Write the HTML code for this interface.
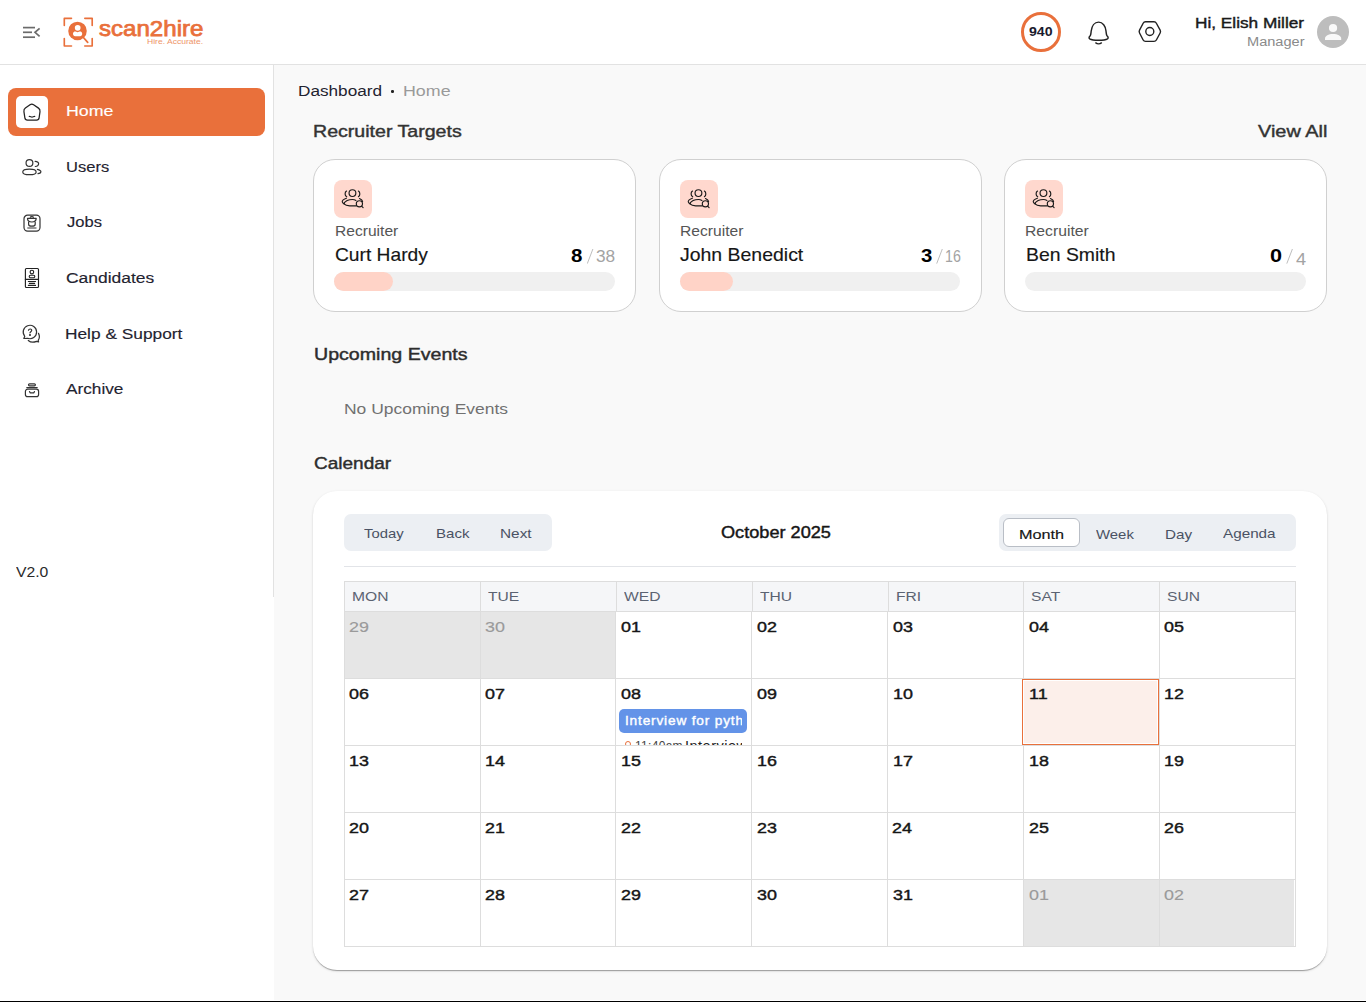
<!DOCTYPE html>
<html><head><meta charset="utf-8"><style>
html,body{margin:0;padding:0}
body{width:1366px;height:1002px;overflow:hidden;position:relative;font-family:"Liberation Sans", sans-serif;background:#fff}
.t{position:absolute;white-space:nowrap;line-height:1;transform-origin:0 50%}

</style></head><body>
<div class="b" style="position:absolute;left:0px;top:0px;width:1366px;height:1000px;background:#f9f9f9"></div>
<div class="b" style="position:absolute;left:0px;top:0px;width:1366px;height:64px;background:#fff"></div>
<div class="b" style="position:absolute;left:0px;top:64px;width:1366px;height:1px;background:#e2e2e2"></div>
<div class="b" style="position:absolute;left:0px;top:65px;width:273px;height:532px;background:#fff"></div>
<div class="b" style="position:absolute;left:273px;top:65px;width:1px;height:532px;background:#e2e2e2"></div>
<div class="b" style="position:absolute;left:0px;top:597px;width:274px;height:403px;background:#fff"></div>
<div class="b" style="position:absolute;left:0px;top:1000px;width:1366px;height:1px;background:#fff"></div>
<div class="b" style="position:absolute;left:0px;top:1001px;width:1366px;height:1px;background:#000"></div>
<svg class="b" style="position:absolute;left:20px;top:22px" width="24" height="20" viewBox="0 0 24 20"><g stroke="#6b6b6b" stroke-width="1.7" fill="none" stroke-linecap="butt"><line x1="3" y1="5.6" x2="15" y2="5.6"/><line x1="3" y1="10.3" x2="12" y2="10.3"/><line x1="3" y1="15.2" x2="15" y2="15.2"/><polyline points="19.6,6.3 15,10.3 19.6,14.4" stroke-linejoin="miter"/></g></svg>
<svg class="b" style="position:absolute;left:62px;top:16px" width="32" height="32" viewBox="0 0 32 32"><g stroke="#E9703B" stroke-width="1.65" fill="none" stroke-linecap="round" stroke-linejoin="round"><polyline points="2.3,9.5 2.3,2.3 9.5,2.3"/><polyline points="22.8,2.3 30.2,2.3 30.2,9.5"/><polyline points="2.3,22.6 2.3,30 9.5,30"/><polyline points="30.2,22.6 30.2,30 22.8,30"/><line x1="21.2" y1="21.2" x2="25.7" y2="26.4" stroke-width="1.75"/></g><circle cx="15.5" cy="14.9" r="9.25" fill="#E9703B"/><circle cx="15.7" cy="11.8" r="2.85" fill="#fff"/><path d="M12.4,15.6 C13.3,15.1 14.5,16.2 15.6,16.2 C16.7,16.2 17.9,15.1 18.8,15.6 C20.2,16.3 20.6,18 19.8,19.2 C19,20.3 17.3,20.3 15.6,20.3 C13.9,20.3 12.2,20.3 11.4,19.2 C10.6,18 11,16.3 12.4,15.6 Z" fill="#fff"/></svg>
<div class="t" style="left:98.89px;top:18.77px;font-size:21.5px;font-weight:400;color:#E9703B;-webkit-text-stroke:0.75px currentColor;transform:scaleX(1.1197);">scan2hire</div>
<div class="t" style="left:147.08px;top:37.89px;font-size:7px;font-weight:400;color:#EE9468;transform:scaleX(1.2200);">Hire. Accurate.</div>
<div class="b" style="position:absolute;left:1021px;top:12px;width:34px;height:34px;border:3px solid #E9703B;border-radius:50%;background:#fff"></div>
<div class="t" style="left:1028.82px;top:26.03px;font-size:12.5px;font-weight:700;color:#1a1a2e;transform:scaleX(1.1311);">940</div>
<svg class="b" style="position:absolute;left:1086px;top:20px" width="26" height="26" viewBox="0 0 26 26"><g stroke="#222" stroke-width="1.45" fill="none" stroke-linejoin="round" stroke-linecap="round"><path d="M4.2,15.8 C5,14.8 4.9,13 5.2,11 C5.8,6 8.5,2.1 12.6,2.1 C16.7,2.1 19.6,6 20,11 C20.3,13 20.2,14.8 21,15.8 C22.2,17 22.6,18 21.5,18.8 C19.5,20 16,20.2 12.6,20.2 C9.2,20.2 5.7,20 3.7,18.8 C2.6,18 3,17 4.2,15.8 Z"/><path d="M9.8,22.9 C11.2,23.9 14,23.9 15.4,22.9"/></g></svg>
<svg class="b" style="position:absolute;left:1136px;top:19px" width="28" height="26" viewBox="0 0 28 26"><g stroke="#222" stroke-width="1.4" fill="none" stroke-linejoin="round"><path d="M3.54,14.02 Q2.80,12.60 3.54,11.18 L7.16,4.22 Q7.90,2.80 9.50,2.80 L18.00,2.80 Q19.60,2.80 20.36,4.21 L24.14,11.19 Q24.90,12.60 24.14,14.01 L20.36,20.99 Q19.60,22.40 18.00,22.40 L9.50,22.40 Q7.90,22.40 7.16,20.98 Z"/><circle cx="13.8" cy="12.5" r="4.0"/></g></svg>
<div class="t" style="left:1194.85px;top:14.78px;font-size:15.4px;font-weight:400;color:#1a1a1a;-webkit-text-stroke:0.42px currentColor;transform:scaleX(1.1190);">Hi, Elish Miller</div>
<div class="t" style="left:1246.59px;top:35.95px;font-size:12.5px;font-weight:400;color:#8a8a8a;transform:scaleX(1.1669);">Manager</div>
<svg class="b" style="position:absolute;left:1316px;top:15px" width="34" height="34" viewBox="0 0 34 34"><circle cx="17" cy="17" r="16" fill="#bdbdbd"/><circle cx="17.05" cy="13" r="4.1" fill="#f9f9f9"/><path d="M9,25 L9,23.6 C9,20.8 12.5,19 17.1,19 C21.7,19 25.2,20.8 25.2,23.6 L25.2,25 Z" fill="#f9f9f9"/></svg>
<div class="b" style="position:absolute;left:8px;top:88px;width:257px;height:48px;background:#E9703B;border-radius:8px"></div>
<div class="b" style="position:absolute;left:16px;top:96px;width:32px;height:32px;background:#fff;border-radius:5px"></div>
<svg class="b" style="position:absolute;left:22px;top:102px" width="20" height="20" viewBox="0 0 20 20"><g stroke="#222" stroke-width="1.25" fill="none" stroke-linejoin="round" stroke-linecap="round"><path d="M8.02,2.70 Q9.80,1.40 11.60,2.67 L16.50,6.13 Q18.30,7.40 17.99,9.58 L17.11,15.82 Q16.80,18.00 14.60,18.00 L5.40,18.00 Q3.20,18.00 2.87,15.82 L1.93,9.58 Q1.60,7.40 3.38,6.10 Z"/><path d="M7.3,14.4 C8.5,14.4 9,15.1 10,15.1 C11,15.1 11.5,14.4 12.7,14.4"/></g></svg>
<div class="t" style="left:65.88px;top:102.94px;font-size:15.55px;font-weight:400;color:#fff;-webkit-text-stroke:0.15px currentColor;transform:scaleX(1.1440);">Home</div>
<div class="t" style="left:66.07px;top:158.86px;font-size:15.5px;font-weight:400;color:#1f2330;-webkit-text-stroke:0.15px currentColor;transform:scaleX(1.0659);">Users</div>
<div class="t" style="left:66.50px;top:213.79px;font-size:15.5px;font-weight:400;color:#1f2330;-webkit-text-stroke:0.15px currentColor;transform:scaleX(1.0684);">Jobs</div>
<div class="t" style="left:65.53px;top:270.42px;font-size:15.5px;font-weight:400;color:#1f2330;-webkit-text-stroke:0.15px currentColor;transform:scaleX(1.1248);">Candidates</div>
<div class="t" style="left:64.61px;top:325.80px;font-size:15.5px;font-weight:400;color:#1f2330;-webkit-text-stroke:0.15px currentColor;transform:scaleX(1.1165);">Help &amp; Support</div>
<div class="t" style="left:66.46px;top:380.81px;font-size:15.5px;font-weight:400;color:#1f2330;-webkit-text-stroke:0.15px currentColor;transform:scaleX(1.1107);">Archive</div>
<div class="t" style="left:15.64px;top:563.67px;font-size:15px;font-weight:400;color:#2a2a2a;transform:scaleX(1.0493);">V2.0</div>
<svg class="b" style="position:absolute;left:21px;top:157px" width="22" height="20" viewBox="0 0 22 20"><g stroke="#333" stroke-width="1.2" fill="none" stroke-linecap="round" stroke-linejoin="round"><circle cx="8.45" cy="5.95" r="3.4"/><ellipse cx="8.45" cy="14.9" rx="6.7" ry="2.8"/><path d="M14.1,4.3 C16.6,4.3 17.8,5.8 17.6,7 C17.4,8.3 16,9.5 14.3,9.5"/><path d="M16.4,12.3 C18.6,12.9 20.2,14 19.9,15 C19.7,15.8 18.3,16.5 17,16.6"/></g></svg>
<svg class="b" style="position:absolute;left:21px;top:212px" width="22" height="22" viewBox="0 0 22 22"><g stroke="#333" stroke-width="1.2" fill="none" stroke-linecap="round" stroke-linejoin="round"><rect x="3" y="3.2" width="16" height="16" rx="3.6"/><path d="M6.5,6.3 L15.2,6.3 C15.2,9.2 13,10 10.85,10 C8.7,10 6.5,9.2 6.5,6.3 Z"/><path d="M7.6,10.2 L7.6,12.2 C7.6,13.6 9,14.2 10.85,14.2 C12.7,14.2 14.2,13.6 14.2,12.2 L14.2,10.2"/><path d="M9.3,5.3 C9.6,4.4 12.1,4.4 12.4,5.3"/><line x1="6.8" y1="16" x2="15" y2="16" stroke="#777" stroke-width="1.4"/></g></svg>
<svg class="b" style="position:absolute;left:23px;top:266px" width="18" height="24" viewBox="0 0 18 24"><g stroke="#222" stroke-width="1.15" fill="none" stroke-linecap="round" stroke-linejoin="round"><rect x="2.4" y="2.5" width="13.1" height="19" rx="1"/><line x1="2.4" y1="13.4" x2="15.5" y2="13.4"/><circle cx="8.9" cy="6" r="1.8"/><rect x="6.2" y="9.2" width="5.6" height="2.5" rx="1.2"/><line x1="5.4" y1="15.5" x2="12.5" y2="15.5"/><line x1="6.4" y1="17.4" x2="11.6" y2="17.4"/><line x1="5.4" y1="19.4" x2="12.5" y2="19.4"/></g></svg>
<svg class="b" style="position:absolute;left:20px;top:323px" width="24" height="22" viewBox="0 0 24 22"><g stroke="#333" stroke-width="1.2" fill="none" stroke-linecap="round" stroke-linejoin="round"><path d="M4.77,13.31 A6.7,6.7 0 1 1 7.61,15.3 L3.8,15.5 Z"/><path d="M8.5,7.2 C8.7,5.6 11.9,5.5 11.7,7.4 C11.6,8.5 10.2,8.8 10,9.8"/><circle cx="10" cy="12" r="0.45" fill="#333"/><path d="M18.5,10.4 C19.6,12.5 19.5,15.5 18.2,17.4 L18.6,18.8 L16.5,18.4 C14,19.4 10.2,19.2 8.3,17.5"/></g></svg>
<svg class="b" style="position:absolute;left:23px;top:381px" width="18" height="18" viewBox="0 0 18 18"><g stroke="#333" stroke-width="1.2" fill="none" stroke-linecap="round" stroke-linejoin="round"><rect x="2.4" y="8.2" width="13.2" height="7.4" rx="2.2"/><rect x="5.5" y="2.8" width="6.9" height="2" rx="1"/><line x1="3.8" y1="6.6" x2="14.2" y2="6.6"/><path d="M6.5,10.6 L7.3,11.8 L10.7,11.8 L11.5,10.6"/></g></svg>
<div class="t" style="left:298.42px;top:82.79px;font-size:15.5px;font-weight:400;color:#1f2330;transform:scaleX(1.1081);">Dashboard</div>
<div class="b" style="position:absolute;left:391.4px;top:90.4px;width:2.6px;height:2.6px;background:#222;border-radius:50%"></div>
<div class="t" style="left:403.07px;top:83.09px;font-size:15.5px;font-weight:400;color:#9a9a9a;transform:scaleX(1.1500);">Home</div>
<div class="t" style="left:313.46px;top:123.92px;font-size:16.8px;font-weight:400;color:#333;-webkit-text-stroke:0.42px currentColor;transform:scaleX(1.1669);">Recruiter Targets</div>
<div class="t" style="left:1257.51px;top:122.56px;font-size:17.2px;font-weight:400;color:#333;-webkit-text-stroke:0.42px currentColor;transform:scaleX(1.1579);">View All</div>
<div class="b" style="position:absolute;left:313px;top:159px;width:321px;height:151px;border:1px solid #d0d0d0;border-radius:22px;background:#fff"></div>
<div class="b" style="position:absolute;left:334px;top:180px;width:38px;height:38px;background:#FFD8CE;border-radius:8px"></div>
<svg class="b" style="position:absolute;left:338px;top:184px" width="30" height="28" viewBox="0 0 30 28"><g stroke="#1a1a1a" stroke-width="1.15" fill="none" stroke-linecap="round"><circle cx="14.45" cy="9.1" r="3.4"/><path d="M8.5,7.1 C6.6,8.3 6.6,11.5 8.7,12.7"/><path d="M20.4,7.1 C22.3,8.3 22.3,11.5 20.4,12.7"/><path d="M8.4,14.2 C6,15 4,16.6 4.3,18 C4.5,19 5.5,19.6 6.4,19.8"/><path d="M5.6,19.6 C7,17.5 10.5,15.5 14.5,15.5 C15.8,15.5 17,15.9 17.9,16.5"/><path d="M5.6,19.6 C7,21 9.5,21.9 11.7,21.9 L18.2,21.9"/><path d="M21.5,14.5 C23,15.2 24.3,16.2 24.6,17.5"/><circle cx="21.4" cy="19.8" r="3.1"/><path d="M23.6,22.2 L25.1,23.7"/></g></svg>
<div class="t" style="left:334.59px;top:223.92px;font-size:14.3px;font-weight:400;color:#555;transform:scaleX(1.0911);">Recruiter</div>
<div class="t" style="left:334.54px;top:247.44px;font-size:17.8px;font-weight:400;color:#161616;-webkit-text-stroke:0.15px currentColor;transform:scaleX(1.0797);">Curt Hardy</div>
<div class="b" style="position:absolute;left:334px;top:272px;width:281px;height:19px;background:#f0f0f0;border-radius:10px"></div>
<div class="b" style="position:absolute;left:334px;top:272px;width:59px;height:19px;background:#FFD3C7;border-radius:10px"></div>
<div class="t" style="left:571.43px;top:247.72px;font-size:17.6px;font-weight:700;color:#000;transform:scaleX(1.1636);">8</div>
<div class="t" style="left:595.82px;top:248.86px;font-size:16px;font-weight:400;color:#a3a3a3;transform:scaleX(1.0785);">38</div>
<svg class="b" style="position:absolute;left:587px;top:248px" width="8" height="17" viewBox="0 0 8 17"><line x1="0.3" y1="15.6" x2="5.9" y2="1" stroke="#b5b5b5" stroke-width="0.9"/></svg>
<div class="b" style="position:absolute;left:659px;top:159px;width:321px;height:151px;border:1px solid #d0d0d0;border-radius:22px;background:#fff"></div>
<div class="b" style="position:absolute;left:680px;top:180px;width:38px;height:38px;background:#FFD8CE;border-radius:8px"></div>
<svg class="b" style="position:absolute;left:684px;top:184px" width="30" height="28" viewBox="0 0 30 28"><g stroke="#1a1a1a" stroke-width="1.15" fill="none" stroke-linecap="round"><circle cx="14.45" cy="9.1" r="3.4"/><path d="M8.5,7.1 C6.6,8.3 6.6,11.5 8.7,12.7"/><path d="M20.4,7.1 C22.3,8.3 22.3,11.5 20.4,12.7"/><path d="M8.4,14.2 C6,15 4,16.6 4.3,18 C4.5,19 5.5,19.6 6.4,19.8"/><path d="M5.6,19.6 C7,17.5 10.5,15.5 14.5,15.5 C15.8,15.5 17,15.9 17.9,16.5"/><path d="M5.6,19.6 C7,21 9.5,21.9 11.7,21.9 L18.2,21.9"/><path d="M21.5,14.5 C23,15.2 24.3,16.2 24.6,17.5"/><circle cx="21.4" cy="19.8" r="3.1"/><path d="M23.6,22.2 L25.1,23.7"/></g></svg>
<div class="t" style="left:679.68px;top:223.92px;font-size:14.3px;font-weight:400;color:#555;transform:scaleX(1.0930);">Recruiter</div>
<div class="t" style="left:680.12px;top:247.34px;font-size:17.8px;font-weight:400;color:#161616;-webkit-text-stroke:0.15px currentColor;transform:scaleX(1.0939);">John Benedict</div>
<div class="b" style="position:absolute;left:680px;top:272px;width:280px;height:19px;background:#f0f0f0;border-radius:10px"></div>
<div class="b" style="position:absolute;left:680px;top:272px;width:52.5px;height:19px;background:#FFD3C7;border-radius:10px"></div>
<div class="t" style="left:921.42px;top:247.72px;font-size:17.6px;font-weight:700;color:#000;transform:scaleX(1.1556);">3</div>
<div class="t" style="left:944.81px;top:248.86px;font-size:16px;font-weight:400;color:#a3a3a3;transform:scaleX(0.8900);">16</div>
<svg class="b" style="position:absolute;left:936px;top:248px" width="8" height="17" viewBox="0 0 8 17"><line x1="0.6999999999999773" y1="15.6" x2="6.299999999999978" y2="1" stroke="#b5b5b5" stroke-width="0.9"/></svg>
<div class="b" style="position:absolute;left:1004px;top:159px;width:321px;height:151px;border:1px solid #d0d0d0;border-radius:22px;background:#fff"></div>
<div class="b" style="position:absolute;left:1025px;top:180px;width:38px;height:38px;background:#FFD8CE;border-radius:8px"></div>
<svg class="b" style="position:absolute;left:1029px;top:184px" width="30" height="28" viewBox="0 0 30 28"><g stroke="#1a1a1a" stroke-width="1.15" fill="none" stroke-linecap="round"><circle cx="14.45" cy="9.1" r="3.4"/><path d="M8.5,7.1 C6.6,8.3 6.6,11.5 8.7,12.7"/><path d="M20.4,7.1 C22.3,8.3 22.3,11.5 20.4,12.7"/><path d="M8.4,14.2 C6,15 4,16.6 4.3,18 C4.5,19 5.5,19.6 6.4,19.8"/><path d="M5.6,19.6 C7,17.5 10.5,15.5 14.5,15.5 C15.8,15.5 17,15.9 17.9,16.5"/><path d="M5.6,19.6 C7,21 9.5,21.9 11.7,21.9 L18.2,21.9"/><path d="M21.5,14.5 C23,15.2 24.3,16.2 24.6,17.5"/><circle cx="21.4" cy="19.8" r="3.1"/><path d="M23.6,22.2 L25.1,23.7"/></g></svg>
<div class="t" style="left:1025.14px;top:223.92px;font-size:14.3px;font-weight:400;color:#555;transform:scaleX(1.0997);">Recruiter</div>
<div class="t" style="left:1025.92px;top:247.34px;font-size:17.8px;font-weight:400;color:#161616;-webkit-text-stroke:0.15px currentColor;transform:scaleX(1.0912);">Ben Smith</div>
<div class="b" style="position:absolute;left:1025px;top:272px;width:281px;height:19px;background:#f0f0f0;border-radius:10px"></div>
<div class="t" style="left:1270.42px;top:247.72px;font-size:17.6px;font-weight:700;color:#000;transform:scaleX(1.2303);">0</div>
<div class="t" style="left:1296.17px;top:251.91px;font-size:16px;font-weight:400;color:#a3a3a3;transform:scaleX(1.1357);">4</div>
<svg class="b" style="position:absolute;left:1286px;top:248px" width="8" height="17" viewBox="0 0 8 17"><line x1="0.8" y1="15.6" x2="6.4" y2="1" stroke="#b5b5b5" stroke-width="0.9"/></svg>
<div class="t" style="left:313.53px;top:346.90px;font-size:16.6px;font-weight:400;color:#2d2d2d;-webkit-text-stroke:0.42px currentColor;transform:scaleX(1.1811);">Upcoming Events</div>
<div class="t" style="left:343.87px;top:400.60px;font-size:15.2px;font-weight:400;color:#717171;transform:scaleX(1.1499);">No Upcoming Events</div>
<div class="t" style="left:313.54px;top:454.88px;font-size:16.4px;font-weight:400;color:#2d2d2d;-webkit-text-stroke:0.42px currentColor;transform:scaleX(1.1592);">Calendar</div>
<div class="b" style="position:absolute;left:313px;top:491px;width:1014px;height:479px;background:#fff;border-radius:24px;box-shadow:0px 2px 1px -1px rgba(0,0,0,0.2),0px 1px 1px 0px rgba(0,0,0,0.14),0px 1px 3px 0px rgba(0,0,0,0.12)"></div>
<div class="b" style="position:absolute;left:344px;top:514px;width:208px;height:37px;background:#eceff3;border-radius:7px"></div>
<div class="t" style="left:364.20px;top:526.96px;font-size:13.6px;font-weight:400;color:#4a5263;transform:scaleX(1.0908);">Today</div>
<div class="t" style="left:435.61px;top:527.26px;font-size:13.6px;font-weight:400;color:#4a5263;transform:scaleX(1.1072);">Back</div>
<div class="t" style="left:500.18px;top:527.26px;font-size:13.6px;font-weight:400;color:#4a5263;transform:scaleX(1.1296);">Next</div>
<div class="t" style="left:720.53px;top:524.88px;font-size:16.6px;font-weight:400;color:#161616;-webkit-text-stroke:0.42px currentColor;transform:scaleX(1.0934);">October 2025</div>
<div class="b" style="position:absolute;left:999px;top:514px;width:297px;height:37px;background:#eceff3;border-radius:7px"></div>
<div class="b" style="position:absolute;left:1003px;top:518px;width:75px;height:27px;border:1px solid #b9bec6;border-radius:6px;background:#fff"></div>
<div class="t" style="left:1018.61px;top:527.55px;font-size:13.6px;font-weight:400;color:#161616;-webkit-text-stroke:0.15px currentColor;transform:scaleX(1.1953);">Month</div>
<div class="t" style="left:1095.77px;top:527.55px;font-size:13.6px;font-weight:400;color:#4a5263;transform:scaleX(1.0967);">Week</div>
<div class="t" style="left:1164.75px;top:527.55px;font-size:13.6px;font-weight:400;color:#4a5263;transform:scaleX(1.1189);">Day</div>
<div class="t" style="left:1223.18px;top:527.45px;font-size:13.6px;font-weight:400;color:#4a5263;transform:scaleX(1.1220);">Agenda</div>
<div class="b" style="position:absolute;left:344px;top:566px;width:952px;height:1px;background:#e2e4e8"></div>
<div class="b" style="position:absolute;left:344px;top:581px;width:952px;height:30px;background:#f5f6f8"></div>
<div class="b" style="position:absolute;left:345px;top:612px;width:135px;height:66px;background:#e6e6e6"></div>
<div class="b" style="position:absolute;left:481px;top:612px;width:134px;height:66px;background:#e6e6e6"></div>
<div class="b" style="position:absolute;left:1024px;top:880px;width:135px;height:66px;background:#e6e6e6"></div>
<div class="b" style="position:absolute;left:1160px;top:880px;width:134px;height:66px;background:#e6e6e6"></div>
<div class="b" style="position:absolute;left:344px;top:581px;width:952px;height:1px;background:#dddddd"></div>
<div class="b" style="position:absolute;left:344px;top:611px;width:952px;height:1px;background:#dddddd"></div>
<div class="b" style="position:absolute;left:344px;top:678px;width:952px;height:1px;background:#dddddd"></div>
<div class="b" style="position:absolute;left:344px;top:745px;width:952px;height:1px;background:#dddddd"></div>
<div class="b" style="position:absolute;left:344px;top:812px;width:952px;height:1px;background:#dddddd"></div>
<div class="b" style="position:absolute;left:344px;top:879px;width:952px;height:1px;background:#dddddd"></div>
<div class="b" style="position:absolute;left:344px;top:946px;width:952px;height:1px;background:#dddddd"></div>
<div class="b" style="position:absolute;left:344px;top:581px;width:1px;height:30px;background:#dddddd"></div>
<div class="b" style="position:absolute;left:480px;top:581px;width:1px;height:30px;background:#dddddd"></div>
<div class="b" style="position:absolute;left:616px;top:581px;width:1px;height:30px;background:#dddddd"></div>
<div class="b" style="position:absolute;left:752px;top:581px;width:1px;height:30px;background:#dddddd"></div>
<div class="b" style="position:absolute;left:888px;top:581px;width:1px;height:30px;background:#dddddd"></div>
<div class="b" style="position:absolute;left:1023px;top:581px;width:1px;height:30px;background:#dddddd"></div>
<div class="b" style="position:absolute;left:1159px;top:581px;width:1px;height:30px;background:#dddddd"></div>
<div class="b" style="position:absolute;left:1295px;top:581px;width:1px;height:30px;background:#dddddd"></div>
<div class="b" style="position:absolute;left:344px;top:611px;width:1px;height:336px;background:#dddddd"></div>
<div class="b" style="position:absolute;left:480px;top:611px;width:1px;height:336px;background:#dddddd"></div>
<div class="b" style="position:absolute;left:615px;top:611px;width:1px;height:336px;background:#dddddd"></div>
<div class="b" style="position:absolute;left:751px;top:611px;width:1px;height:336px;background:#dddddd"></div>
<div class="b" style="position:absolute;left:887px;top:611px;width:1px;height:336px;background:#dddddd"></div>
<div class="b" style="position:absolute;left:1023px;top:611px;width:1px;height:336px;background:#dddddd"></div>
<div class="b" style="position:absolute;left:1159px;top:611px;width:1px;height:336px;background:#dddddd"></div>
<div class="b" style="position:absolute;left:1295px;top:611px;width:1px;height:336px;background:#dddddd"></div>
<div class="b" style="position:absolute;left:1022px;top:679px;width:137px;height:66px;background:#fff;box-shadow:inset 0 0 0 1px #E9703B"></div>
<div class="b" style="position:absolute;left:1024px;top:681px;width:133px;height:62px;background:#fcefea"></div>
<div class="t" style="left:352.22px;top:590.40px;font-size:13.6px;font-weight:400;color:#5b6372;transform:scaleX(1.1492);">MON</div>
<div class="t" style="left:487.98px;top:590.40px;font-size:13.6px;color:#5b6372;transform:scaleX(1.1492)">TUE</div>
<div class="t" style="left:623.84px;top:590.40px;font-size:13.6px;color:#5b6372;transform:scaleX(1.1492)">WED</div>
<div class="t" style="left:759.70px;top:590.40px;font-size:13.6px;color:#5b6372;transform:scaleX(1.1492)">THU</div>
<div class="t" style="left:895.55px;top:590.40px;font-size:13.6px;color:#5b6372;transform:scaleX(1.1492)">FRI</div>
<div class="t" style="left:1031.41px;top:590.40px;font-size:13.6px;color:#5b6372;transform:scaleX(1.1492)">SAT</div>
<div class="t" style="left:1167.27px;top:590.40px;font-size:13.6px;color:#5b6372;transform:scaleX(1.1492)">SUN</div>
<div class="t" style="left:349.22px;top:619.03px;font-size:15px;font-weight:400;-webkit-text-stroke:0.15px currentColor;color:#9a9a9a;transform:scaleX(1.1934)">29</div>
<div class="t" style="left:485.08px;top:619.03px;font-size:15px;font-weight:400;-webkit-text-stroke:0.15px currentColor;color:#9a9a9a;transform:scaleX(1.1934)">30</div>
<div class="t" style="left:620.93px;top:619.03px;font-size:15px;font-weight:400;-webkit-text-stroke:0.42px currentColor;color:#161616;transform:scaleX(1.1934)">01</div>
<div class="t" style="left:756.79px;top:619.03px;font-size:15px;font-weight:400;-webkit-text-stroke:0.42px currentColor;color:#161616;transform:scaleX(1.1934)">02</div>
<div class="t" style="left:892.65px;top:619.03px;font-size:15px;font-weight:400;-webkit-text-stroke:0.42px currentColor;color:#161616;transform:scaleX(1.1934)">03</div>
<div class="t" style="left:1028.51px;top:619.03px;font-size:15px;font-weight:400;-webkit-text-stroke:0.42px currentColor;color:#161616;transform:scaleX(1.1934)">04</div>
<div class="t" style="left:1164.36px;top:619.03px;font-size:15px;font-weight:400;-webkit-text-stroke:0.42px currentColor;color:#161616;transform:scaleX(1.1934)">05</div>
<div class="t" style="left:349.22px;top:686.03px;font-size:15px;font-weight:400;-webkit-text-stroke:0.42px currentColor;color:#161616;transform:scaleX(1.1934)">06</div>
<div class="t" style="left:485.08px;top:686.03px;font-size:15px;font-weight:400;-webkit-text-stroke:0.42px currentColor;color:#161616;transform:scaleX(1.1934)">07</div>
<div class="t" style="left:620.93px;top:686.03px;font-size:15px;font-weight:400;-webkit-text-stroke:0.42px currentColor;color:#161616;transform:scaleX(1.1934)">08</div>
<div class="t" style="left:756.79px;top:686.03px;font-size:15px;font-weight:400;-webkit-text-stroke:0.42px currentColor;color:#161616;transform:scaleX(1.1934)">09</div>
<div class="t" style="left:892.65px;top:686.03px;font-size:15px;font-weight:400;-webkit-text-stroke:0.42px currentColor;color:#161616;transform:scaleX(1.1934)">10</div>
<div class="t" style="left:1028.51px;top:686.03px;font-size:15px;font-weight:400;-webkit-text-stroke:0.42px currentColor;color:#161616;transform:scaleX(1.1934)">11</div>
<div class="t" style="left:1164.36px;top:686.03px;font-size:15px;font-weight:400;-webkit-text-stroke:0.42px currentColor;color:#161616;transform:scaleX(1.1934)">12</div>
<div class="t" style="left:349.22px;top:753.03px;font-size:15px;font-weight:400;-webkit-text-stroke:0.42px currentColor;color:#161616;transform:scaleX(1.1934)">13</div>
<div class="t" style="left:485.08px;top:753.03px;font-size:15px;font-weight:400;-webkit-text-stroke:0.42px currentColor;color:#161616;transform:scaleX(1.1934)">14</div>
<div class="t" style="left:620.93px;top:753.03px;font-size:15px;font-weight:400;-webkit-text-stroke:0.42px currentColor;color:#161616;transform:scaleX(1.1934)">15</div>
<div class="t" style="left:756.79px;top:753.03px;font-size:15px;font-weight:400;-webkit-text-stroke:0.42px currentColor;color:#161616;transform:scaleX(1.1934)">16</div>
<div class="t" style="left:892.65px;top:753.03px;font-size:15px;font-weight:400;-webkit-text-stroke:0.42px currentColor;color:#161616;transform:scaleX(1.1934)">17</div>
<div class="t" style="left:1028.51px;top:753.03px;font-size:15px;font-weight:400;-webkit-text-stroke:0.42px currentColor;color:#161616;transform:scaleX(1.1934)">18</div>
<div class="t" style="left:1164.36px;top:753.03px;font-size:15px;font-weight:400;-webkit-text-stroke:0.42px currentColor;color:#161616;transform:scaleX(1.1934)">19</div>
<div class="t" style="left:349.22px;top:820.03px;font-size:15px;font-weight:400;-webkit-text-stroke:0.42px currentColor;color:#161616;transform:scaleX(1.1934)">20</div>
<div class="t" style="left:485.08px;top:820.03px;font-size:15px;font-weight:400;-webkit-text-stroke:0.42px currentColor;color:#161616;transform:scaleX(1.1934)">21</div>
<div class="t" style="left:620.93px;top:820.03px;font-size:15px;font-weight:400;-webkit-text-stroke:0.42px currentColor;color:#161616;transform:scaleX(1.1934)">22</div>
<div class="t" style="left:756.79px;top:820.03px;font-size:15px;font-weight:400;-webkit-text-stroke:0.42px currentColor;color:#161616;transform:scaleX(1.1934)">23</div>
<div class="t" style="left:892.12px;top:820.03px;font-size:15px;font-weight:400;color:#161616;-webkit-text-stroke:0.42px currentColor;transform:scaleX(1.1934);">24</div>
<div class="t" style="left:1028.51px;top:820.03px;font-size:15px;font-weight:400;-webkit-text-stroke:0.42px currentColor;color:#161616;transform:scaleX(1.1934)">25</div>
<div class="t" style="left:1164.36px;top:820.03px;font-size:15px;font-weight:400;-webkit-text-stroke:0.42px currentColor;color:#161616;transform:scaleX(1.1934)">26</div>
<div class="t" style="left:349.22px;top:887.03px;font-size:15px;font-weight:400;-webkit-text-stroke:0.42px currentColor;color:#161616;transform:scaleX(1.1934)">27</div>
<div class="t" style="left:485.08px;top:887.03px;font-size:15px;font-weight:400;-webkit-text-stroke:0.42px currentColor;color:#161616;transform:scaleX(1.1934)">28</div>
<div class="t" style="left:620.93px;top:887.03px;font-size:15px;font-weight:400;-webkit-text-stroke:0.42px currentColor;color:#161616;transform:scaleX(1.1934)">29</div>
<div class="t" style="left:756.79px;top:887.03px;font-size:15px;font-weight:400;-webkit-text-stroke:0.42px currentColor;color:#161616;transform:scaleX(1.1934)">30</div>
<div class="t" style="left:892.65px;top:887.03px;font-size:15px;font-weight:400;-webkit-text-stroke:0.42px currentColor;color:#161616;transform:scaleX(1.1934)">31</div>
<div class="t" style="left:1028.51px;top:887.03px;font-size:15px;font-weight:400;-webkit-text-stroke:0.15px currentColor;color:#9a9a9a;transform:scaleX(1.1934)">01</div>
<div class="t" style="left:1164.36px;top:887.03px;font-size:15px;font-weight:400;-webkit-text-stroke:0.15px currentColor;color:#9a9a9a;transform:scaleX(1.1934)">02</div>
<div class="b" style="position:absolute;left:619px;top:709px;width:128px;height:24px;background:#6393e8;border-radius:5px"></div>
<div class="b" style="position:absolute;left:619px;top:709px;width:123px;height:24px;overflow:hidden">
<div class="t" style="left:5.8px;top:5px;font-size:13.2px;font-weight:400;-webkit-text-stroke:0.4px #fff;color:#fff;letter-spacing:0.8px;transform:scaleX(1.035)">Interview for python developer</div>
</div>
<div class="b" style="position:absolute;left:617px;top:733px;width:125px;height:12px;overflow:hidden">
<div style="position:absolute;left:8px;top:7.5px;width:4px;height:4px;border-radius:50%;border:1.5px solid #E9703B"></div>
<div class="t" style="left:18px;top:7px;font-size:12px;color:#444;letter-spacing:0.3px">11:40am</div>
<div class="t" style="left:68px;top:6px;font-size:14.5px;color:#222;letter-spacing:0.5px">Interview</div>
</div>
</body></html>
